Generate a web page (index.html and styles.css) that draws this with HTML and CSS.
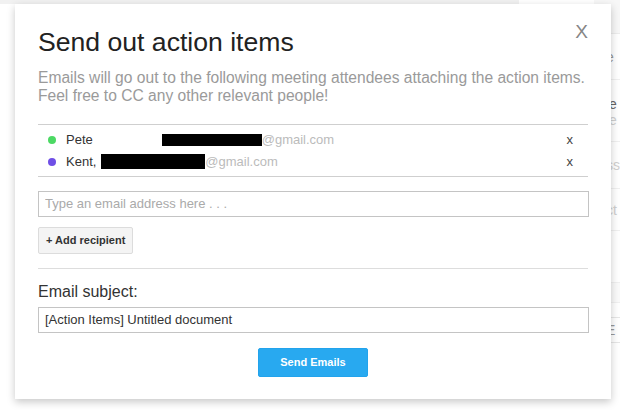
FILE: index.html
```html
<!DOCTYPE html>
<html>
<head>
<meta charset="utf-8">
<title>Send out action items</title>
<link rel="stylesheet" href="styles.css">
</head>
<body>
<div class="page">
  <div class="main-area">
    <div class="topstrip"></div>
  </div>
  <aside class="side">
    <div class="side-head"></div>
    <div class="side-row r1"><span class="t-mid">e</span></div>
    <div class="side-row r2"><span class="t-dark">le</span><span class="t-faint">le</span></div>
    <div class="side-row r3"><span class="t-faint">ss</span></div>
    <div class="side-row r4"><span class="t-faint">ct</span></div>
    <div class="side-row r5"></div>
    <div class="side-band"></div>
    <div class="side-box"><span class="t-mid">E</span></div>
  </aside>
</div>

<div class="dialog">
  <div class="close">X</div>
  <h1 class="title">Send out action items</h1>
  <p class="desc">Emails will go out to the following meeting attendees attaching the action items. Feel free to CC any other relevant people!</p>

  <ul class="recipients">
    <li class="recipient">
      <span class="dot dot-green"></span>
      <span class="name">Pete</span>
      <span class="redact redact-pete"></span><span class="domain">@gmail.com</span>
      <span class="remove">x</span>
    </li>
    <li class="recipient">
      <span class="dot dot-purple"></span>
      <span class="name">Kent,</span>
      <span class="redact redact-kent"></span><span class="domain">@gmail.com</span>
      <span class="remove">x</span>
    </li>
  </ul>

  <input class="field field-email" type="text" placeholder="Type an email address here . . .">
  <div class="add-row"><button class="btn-add">+ Add recipient</button></div>

  <div class="divider"></div>

  <div class="label">Email subject:</div>
  <input class="field field-subject" type="text" value="[Action Items] Untitled document">

  <div class="send-row"><button class="btn-send">Send Emails</button></div>
</div>
</body>
</html>
```

FILE: styles.css
```css
* { box-sizing: border-box; }

html, body {
  margin: 0;
  padding: 0;
}

body {
  width: 620px;
  height: 410px;
  overflow: hidden;
  background: #ffffff;
  font-family: "Liberation Sans", Arial, sans-serif;
  position: relative;
}

/* background page */
.page {
  display: flex;
  height: 410px;
}

.main-area {
  width: 525px;
}

.topstrip {
  height: 4px;
  background: #f1f1f1;
}

.side {
  margin-left: 75px;
  flex: 1;
  display: flex;
  flex-direction: column;
  font-size: 14px;
  line-height: 16px;
}

.side-head {
  height: 34px;
  background: #f7f7f7;
  border-bottom: 1px solid #ececec;
}

.side-row {
  display: flex;
  flex-direction: column;
  justify-content: center;
  padding-left: 12px;
  border-bottom: 1px solid #f0f0f0;
}

.r1 { height: 46px; }
.r2 { height: 62px; padding-top: 2px; }
.r3 { height: 47px; }
.r4 { height: 42px; }
.r5 { height: 52px; }

.side-band {
  height: 20px;
  background: #fafafa;
  border-bottom: 1px solid #f0f0f0;
}

.side-box {
  margin-top: 14px;
  height: 26px;
  padding-left: 12px;
  display: flex;
  align-items: center;
  border-top: 1px solid #e6e6e6;
  border-bottom: 1px solid #e6e6e6;
}

.t-dark { color: #666; }
.t-mid { color: #999; }
.t-faint { color: #d0d0d0; }

/* dialog overlay */
.dialog {
  position: absolute;
  left: 15px;
  top: 4px;
  width: 596px;
  padding: 23px 23px 22px;
  background: #ffffff;
  box-shadow: 0 3px 8px rgba(0, 0, 0, 0.22);
}

.close {
  position: absolute;
  top: 17px;
  right: 23px;
  font-size: 19px;
  line-height: 22px;
  color: #868686;
}

.title {
  margin: 0;
  font-size: 26.6px;
  line-height: 30px;
  font-weight: normal;
  color: #222;
}

.desc {
  margin: 12px 0 0;
  font-size: 15.6px;
  line-height: 18.4px;
  color: #9a9a9a;
}

.recipients {
  list-style: none;
  margin: 18px 0 0;
  padding: 4px 15px 3px 10px;
  border-top: 1px solid #cfcfcf;
  border-bottom: 1px solid #cfcfcf;
}

.recipient {
  display: flex;
  align-items: center;
  height: 22px;
  font-size: 13px;
  color: #333;
}

.dot {
  width: 8px;
  height: 8px;
  border-radius: 50%;
  margin-right: 10px;
  flex: none;
}

.dot-green { background: #4cd964; }
.dot-purple { background: #6f4fe6; }

.name {
  white-space: pre;
}

.redact {
  display: inline-block;
  background: #000;
  flex: none;
}

.redact-pete {
  width: 100px;
  height: 12px;
  margin-left: 69px;
}

.redact-kent {
  width: 104px;
  height: 15px;
  margin-left: 5px;
}

.domain {
  color: #bbb;
}

.remove {
  margin-left: auto;
  color: #444;
}

.field {
  display: block;
  width: 551px;
  height: 26px;
  margin: 0;
  padding: 0 6px;
  border: 1px solid #c4c4c4;
  border-radius: 0;
  outline: none;
  font-family: "Liberation Sans", Arial, sans-serif;
  font-size: 13px;
  color: #333;
  background: #fff;
}

.field::placeholder {
  color: #aaa;
}

.field-email {
  margin-top: 14px;
}

.add-row {
  margin-top: 10px;
  display: flex;
}

.btn-add {
  height: 27px;
  padding: 0 7px;
  margin: 0;
  border: 1px solid #dcdcdc;
  border-radius: 2px;
  background: #f4f4f4;
  font-family: "Liberation Sans", Arial, sans-serif;
  font-size: 11px;
  font-weight: bold;
  color: #333;
}

.divider {
  margin-top: 14px;
  height: 1px;
  background: #dddddd;
}

.label {
  margin-top: 14px;
  font-size: 16px;
  line-height: 18px;
  color: #333;
}

.field-subject {
  margin-top: 6px;
}

.send-row {
  margin-top: 15px;
  display: flex;
  justify-content: center;
}

.btn-send {
  width: 110px;
  height: 29px;
  margin: 0;
  padding: 0;
  border: 1px solid #22a3ec;
  border-radius: 2px;
  background: #28a9f0;
  font-family: "Liberation Sans", Arial, sans-serif;
  font-size: 11px;
  font-weight: bold;
  color: #fff;
}
```
